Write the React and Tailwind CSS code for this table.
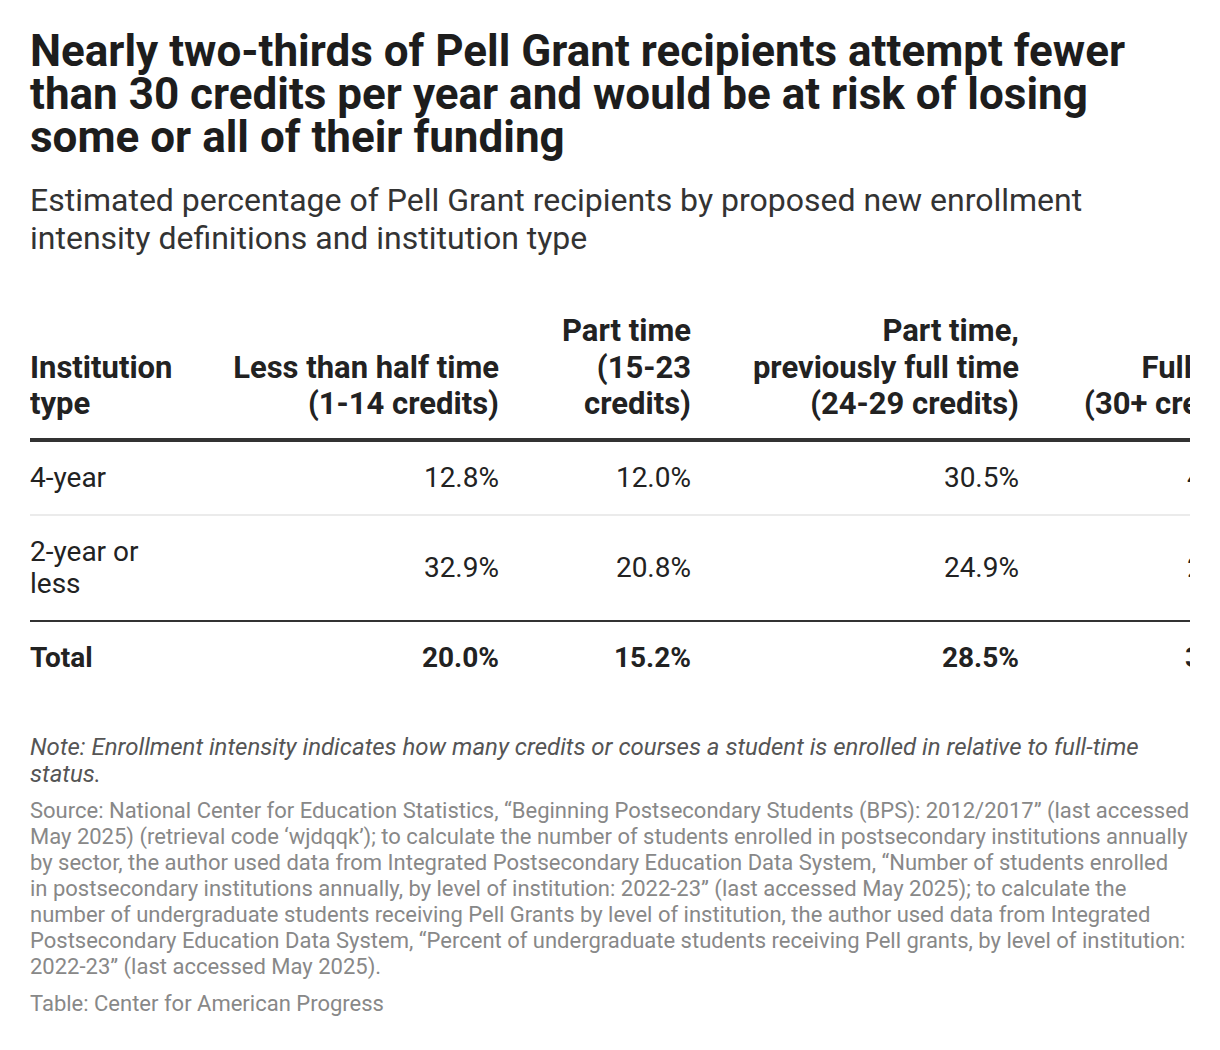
const columns = [
  { lines: ['Institution', 'type'], align: 'left' },
  { lines: ['Less than half time', '(1-14 credits)'] },
  { lines: ['Part time', '(15-23', 'credits)'] },
  { lines: ['Part time,', 'previously full time', '(24-29 credits)'] },
  { lines: ['Full time', '(30+ credits)'] },
]

const rows = [
  { label: ['4-year'], values: ['12.8%', '12.0%', '30.5%', '44.7%'] },
  { label: ['2-year or', 'less'], values: ['32.9%', '20.8%', '24.9%', '21.4%'] },
]

const total = { label: 'Total', values: ['20.0%', '15.2%', '28.5%', '36.3%'] }

const grid = 'grid grid-cols-[150px_319px_192px_328px_243px]'

function HeaderCell({ lines, align }) {
  return (
    <div className={`flex flex-col justify-end pb-[15px] ${align === 'left' ? 'items-start' : 'items-end'}`}>
      {lines.map((line) => (
        <span key={line} className="whitespace-nowrap">
          {line}
        </span>
      ))}
    </div>
  )
}

export default function App() {
  return (
    <div className="min-h-[1050px] bg-white px-[30px] pt-[30px] font-['Roboto',sans-serif]">
      <h1 className="max-w-[1150px] text-[44px] leading-[43px] font-bold text-[#1d1d1d]">
        Nearly two-thirds of Pell Grant recipients attempt fewer than 30 credits per year and would be at risk of losing some or all of their funding
      </h1>
      <p className="mt-[22px] text-[32px] leading-[38px] text-[#333]">
        Estimated percentage of Pell Grant recipients by proposed new enrollment intensity definitions and institution type
      </p>

      <div className="mt-[56px] w-[1160px] overflow-hidden">
        <div className="w-max">
          <div className={`${grid} border-b-4 border-[#333] text-[31px] leading-[36.5px] font-bold text-[#222]`}>
            {columns.map((col, i) => (
              <HeaderCell key={i} lines={col.lines} align={col.align} />
            ))}
          </div>

          {rows.map((row, i) => (
            <div
              key={i}
              className={`${grid} items-center text-[28px] leading-[32px] text-[#222] ${i === 0 ? 'border-b-2 border-[#ebebeb]' : 'border-b-2 border-[#333]'}`}
            >
              <div className="py-5">
                {row.label.map((l) => (
                  <div key={l}>{l}</div>
                ))}
              </div>
              {row.values.map((v, j) => (
                <div key={j} className="text-right">
                  {v}
                </div>
              ))}
            </div>
          ))}

          <div className={`${grid} items-center text-[28px] leading-[32px] font-bold text-[#222]`}>
            <div className="py-5">{total.label}</div>
            {total.values.map((v, j) => (
              <div key={j} className="text-right">
                {v}
              </div>
            ))}
          </div>
        </div>
      </div>

      <p className="mt-[40px] text-[24px] leading-[27px] italic text-[#555]">
        Note: Enrollment intensity indicates how many credits or courses a student is enrolled in relative to full-time status.
      </p>
      <p className="mt-[10px] text-[22px] leading-[26px] text-[#888]">
        Source: National Center for Education Statistics, “Beginning Postsecondary Students (BPS): 2012/2017” (last accessed May 2025) (retrieval code ‘wjdqqk’); to calculate the number of students enrolled in postsecondary institutions annually by sector, the author used data from Integrated Postsecondary Education Data System, “Number of students enrolled in postsecondary institutions annually, by level of institution: 2022-23” (last accessed May 2025); to calculate the number of undergraduate students receiving Pell Grants by level of institution, the author used data from Integrated Postsecondary Education Data System, “Percent of undergraduate students receiving Pell grants, by level of institution: 2022-23” (last accessed May 2025).
      </p>
      <p className="mt-[11px] text-[22px] leading-[26px] text-[#888]">Table: Center for American Progress</p>
    </div>
  )
}
